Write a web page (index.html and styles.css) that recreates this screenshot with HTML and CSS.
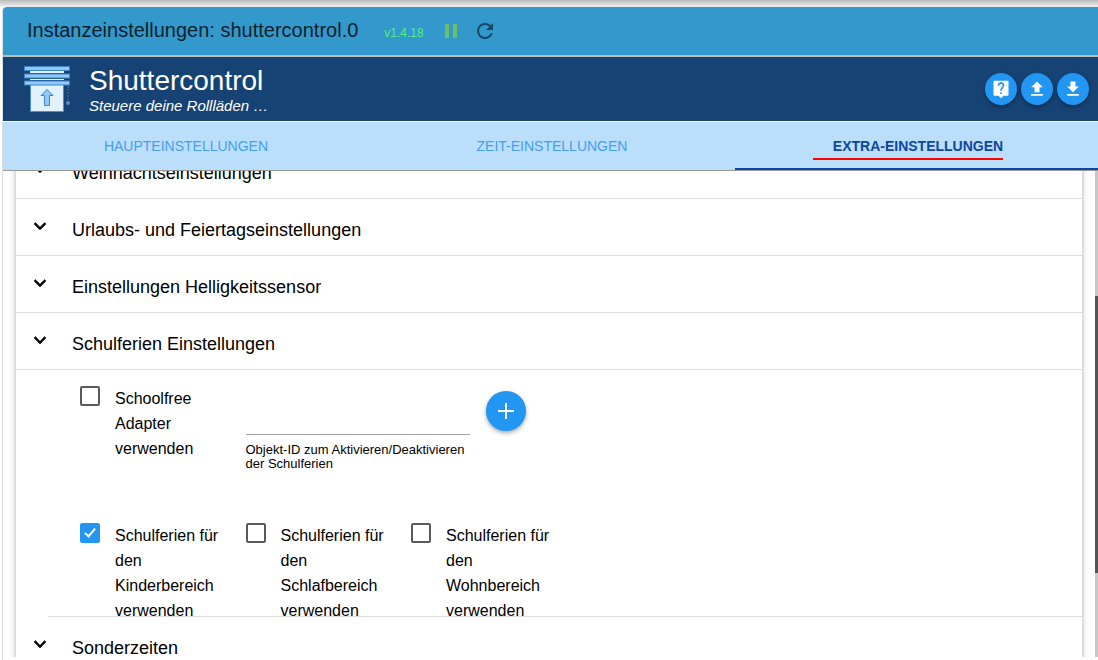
FILE: index.html
```html
<!DOCTYPE html>
<html lang="de">
<head>
    <meta charset="UTF-8">
    <meta name="viewport" content="width=device-width, initial-scale=1.0">
    <title>Instanzeinstellungen: shuttercontrol.0</title>
    <link rel="stylesheet" href="styles.css">
</head>
<body>
    <div class="dialog">
        <div class="title-bar">
            <h1>Instanzeinstellungen: shuttercontrol.0</h1>
            <span class="version">v1.4.18</span>
            <button class="icon-button pause" aria-label="Pause">
                <svg viewBox="0 0 24 24"><path d="M6 19h4V5H6v14zm8-14v14h4V5h-4z"/></svg>
            </button>
            <button class="icon-button refresh" aria-label="Neu starten">
                <svg viewBox="0 0 24 24"><path d="M17.65 6.35A7.96 7.96 0 0 0 12 4a8 8 0 1 0 7.73 10h-2.08A6 6 0 1 1 12 6c1.66 0 3.14.69 4.22 1.78L13 11h7V4l-2.35 2.35z"/></svg>
            </button>
        </div>

        <header class="header">
            <svg class="logo" viewBox="0 0 46 46">
                <path d="M6 5h34v2H6zm0 8h34v1H6z" fill="#e1f1fd"/>
                <rect x="6.5" y="18.5" width="33" height="27" fill="#e1f1fd" stroke="#4a90d6"/>
                <g fill="#90caf9" stroke="#3d84c9">
                    <rect x=".5" y=".5" width="45" height="4"/>
                    <rect x=".5" y="8" width="45" height="4"/>
                    <rect x=".5" y="15" width="45" height="4"/>
                    <path d="M23 23.5l-6 6h3.5v10h5v-10H29z"/>
                </g>
                <path d="M44 20v16" fill="none" stroke="#3a78b5" stroke-dasharray="2 1"/>
                <circle cx="44" cy="37" r="2" fill="#4a90d6"/>
            </svg>
            <div class="heading">
                <h2>Shuttercontrol</h2>
                <p>Steuere deine Rollläden …</p>
            </div>
            <div class="actions">
                <button class="round" aria-label="Hilfe">
                    <svg viewBox="0 0 24 24"><path d="M20 2H4a1 1 0 0 0-1 1v16a1 1 0 0 0 1 1h5l3 3 3-3h5a1 1 0 0 0 1-1V3a1 1 0 0 0-1-1zm-7 16h-2v-2h2v2zm2.070-7.750l-.9.920C13.450 11.900 13 12.500 13 14h-2v-.5c0-1.100.450-2.100 1.170-2.830l1.240-1.260A2 2 0 1 0 10 8H8a4 4 0 1 1 7.070 2.250z"/></svg>
                </button>
                <button class="round" aria-label="Hochladen">
                    <svg viewBox="0 0 24 24"><path d="M9 16h6v-6h4l-7-7-7 7h4zm-4 2h14v2H5z"/></svg>
                </button>
                <button class="round" aria-label="Herunterladen">
                    <svg viewBox="0 0 24 24"><path d="M19 9h-4V3H9v6H5l7 7 7-7zM5 18v2h14v-2H5z"/></svg>
                </button>
            </div>
        </header>

        <nav class="tabs">
            <a href="#main">HAUPTEINSTELLUNGEN</a>
            <a href="#time">ZEIT-EINSTELLUNGEN</a>
            <a href="#extra" class="active"><span>EXTRA-EINSTELLUNGEN</span></a>
        </nav>

        <main class="content">
            <div class="panel">
                <button class="section">
                    <svg viewBox="0 0 24 24"><path d="M16.590 8.590L12 13.170 7.410 8.590 6 10l6 6 6-6z"/></svg>
                    <span>Weihnachtseinstellungen</span>
                </button>
                <button class="section">
                    <svg viewBox="0 0 24 24"><path d="M16.590 8.590L12 13.170 7.410 8.590 6 10l6 6 6-6z"/></svg>
                    <span>Urlaubs- und Feiertagseinstellungen</span>
                </button>
                <button class="section">
                    <svg viewBox="0 0 24 24"><path d="M16.590 8.590L12 13.170 7.410 8.590 6 10l6 6 6-6z"/></svg>
                    <span>Einstellungen Helligkeitssensor</span>
                </button>
                <button class="section">
                    <svg viewBox="0 0 24 24"><path d="M16.590 8.590L12 13.170 7.410 8.590 6 10l6 6 6-6z"/></svg>
                    <span>Schulferien Einstellungen</span>
                </button>

                <div class="section-body">
                    <div class="row">
                        <label class="check"><input type="checkbox"><span>Schoolfree Adapter verwenden</span></label>
                        <div class="field">
                            <input type="text" id="schoolfree-id">
                            <label for="schoolfree-id">Objekt-ID zum Aktivieren/Deaktivieren der Schulferien</label>
                        </div>
                        <button class="round add" aria-label="Objekt-ID auswählen">
                            <svg viewBox="0 0 24 24"><path d="M20 13h-7v7h-2v-7H4v-2h7V4h2v7h7v2z"/></svg>
                        </button>
                    </div>
                    <div class="row areas">
                        <label class="check"><input type="checkbox" checked><span>Schulferien für den Kinderbereich verwenden</span></label>
                        <label class="check"><input type="checkbox"><span>Schulferien für den Schlafbereich verwenden</span></label>
                        <label class="check"><input type="checkbox"><span>Schulferien für den Wohnbereich verwenden</span></label>
                    </div>
                </div>

                <button class="section">
                    <svg viewBox="0 0 24 24"><path d="M16.590 8.590L12 13.170 7.410 8.590 6 10l6 6 6-6z"/></svg>
                    <span>Sonderzeiten</span>
                </button>
            </div>
            <div class="scrollbar"><div class="thumb"></div></div>
        </main>
    </div>
</body>
</html>
```
FILE: styles.css
```css
* {
    box-sizing: border-box;
}

body {
    margin: 0;
    height: 100vh;
    padding: 7px 0 0 2px;
    overflow: hidden;
    background: #fff linear-gradient(#bbb, #f2f2f2 7px, #fff 7px);
    font-family: Arial, "Liberation Sans", sans-serif;
    color: #000;
}

button {
    font: inherit;
    color: inherit;
    border: none;
    padding: 0;
    background: none;
    cursor: pointer;
}

h1, h2, p {
    margin: 0;
    font-weight: normal;
}

svg {
    display: block;
    fill: currentColor;
}

.dialog {
    display: flex;
    flex-direction: column;
    height: 100%;
    padding-bottom: 3px;
    border-left: 1px solid #ddd;
    border-top-left-radius: 4px;
}

/* Titelleiste */
.title-bar {
    display: flex;
    flex: none;
    align-items: center;
    height: 50px;
    padding-left: 24px;
    background: #3399cc;
    border-bottom: 2px solid #bbb;
    border-top-left-radius: 4px;
    color: #0b212c;
}

.title-bar h1 {
    font-size: 20px;
    line-height: 24px;
    padding-bottom: 2px;
}

.version {
    margin: 4px 15px 0 26px;
    font-size: 12px;
    color: #4df07c;
}

.icon-button svg {
    width: 24px;
    height: 24px;
}

.pause {
    margin-right: 10px;
    color: #6abf69;
}

.refresh {
    color: #164a63;
}

/* Kopfbereich */
.header {
    display: flex;
    flex: none;
    align-items: center;
    height: 65px;
    padding: 0 9px 0 21px;
    background: #174374;
    border-bottom: 1px solid #fff;
    color: #fff;
}

.logo {
    width: 46px;
    height: 46px;
    margin-right: 19px;
}

.heading {
    padding-top: 4px;
}

.heading h2 {
    font-size: 28px;
    line-height: 30px;
}

.heading p {
    font-size: 15px;
    line-height: 20px;
    font-style: italic;
}

.actions {
    display: flex;
    gap: 4px;
    margin-left: auto;
}

.round {
    display: grid;
    place-items: center;
    width: 32px;
    height: 32px;
    border-radius: 50%;
    background: #2196f3;
    color: #fff;
    box-shadow: 0 2px 4px rgba(0, 0, 0, 0.35);
}

.round svg {
    width: 20px;
    height: 20px;
}

/* Reiter */
.tabs {
    display: grid;
    flex: none;
    grid-template-columns: repeat(3, 1fr);
    height: 49px;
    margin-right: -3px;
    background: #bbdefb;
    border-bottom: 1px solid #999;
    font-size: 14px;
    line-height: 48px;
    text-align: center;
}

.tabs a {
    color: #42a0f0;
    text-decoration: none;
}

.tabs .active {
    font-weight: bold;
    color: #0d47a1;
    box-shadow: inset 0 -2px #0d47a1;
}

.active span {
    position: relative;
}

.active span::after {
    content: "";
    position: absolute;
    left: -20px;
    right: 0;
    bottom: -6px;
    height: 2px;
    background: #f00;
}

/* Inhalt */
.content {
    position: relative;
    flex: 1;
    min-height: 0;
    padding: 0 16px 0 13px;
    overflow: hidden;
}

.panel {
    margin-top: -29px;
    box-shadow: 0 0 0 2px #ddd, 0 0 6px 2px rgba(0, 0, 0, 0.12);
}

.section {
    display: flex;
    align-items: center;
    gap: 20px;
    width: 100%;
    height: 57px;
    padding-left: 12px;
    border-bottom: 1px solid #ddd;
    font-size: 18px;
    line-height: 24px;
    text-align: left;
}

.section svg {
    width: 24px;
    height: 24px;
    margin-bottom: 2px;
    stroke: currentColor;
    stroke-width: 0.5;
}

.section span {
    padding-top: 6px;
}

.section-body {
    margin-left: 32px;
    padding: 16px 33px 0 32px;
    border-bottom: 1px solid #ddd;
}

.row {
    display: grid;
    grid-template-columns: repeat(12, 1fr);
    column-gap: 24px;
    align-items: start;
}

.areas {
    margin: 52px 0 -7px;
}

.check {
    grid-column: span 2;
    display: flex;
    gap: 15px;
    font-size: 16px;
    line-height: 25px;
}

.check input {
    appearance: none;
    flex: none;
    width: 20px;
    height: 20px;
    margin: 0;
    border: 2px solid #5a5a5a;
    border-radius: 2px;
}

.check input:checked {
    border-color: #2196f3;
    background: #2196f3;
}

.check input:checked::before {
    content: "";
    display: block;
    width: 4px;
    height: 9px;
    margin: 1px auto;
    border: solid #fff;
    border-width: 0 2px 2px 0;
    transform: rotate(40deg);
}

.field {
    grid-column: span 3;
}

.field input {
    display: block;
    width: 100%;
    height: 49px;
    border: none;
    border-bottom: 1px solid #9e9e9e;
    outline: none;
    background: none;
    font-size: 16px;
}

.field label {
    display: block;
    padding-top: 8px;
    font-size: 13px;
    line-height: 14px;
}

.add {
    width: 40px;
    height: 40px;
    margin: 5px 0 0 -8px;
}

.add svg {
    width: 24px;
    height: 24px;
}

.scrollbar {
    position: absolute;
    top: 0;
    right: 0;
    width: 3px;
    height: 100%;
    padding-top: 125px;
    background: #c8c8c8;
}

.thumb {
    height: 277px;
    background: #555;
}
```
